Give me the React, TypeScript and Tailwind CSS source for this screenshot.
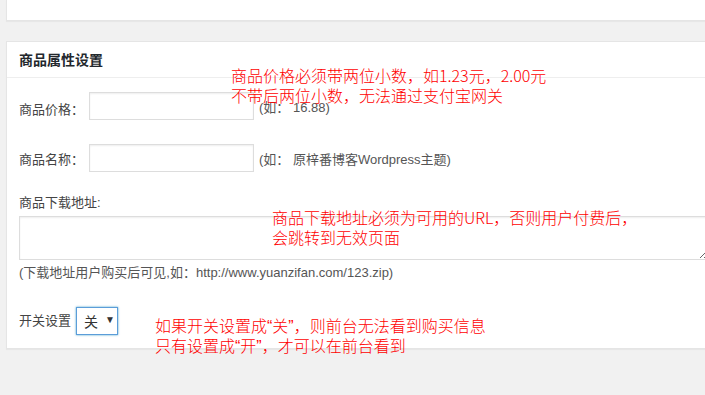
export default function App() {
  const q = "font-['Liberation_Sans',sans-serif]";
  return (
    <div className="relative w-[705px] h-[395px] overflow-hidden bg-[#f1f1f1] font-['Liberation_Sans','Noto_Sans_CJK_SC',sans-serif]">
      <div className="pl-[6px]">
        <div className="h-[21px] w-[720px] bg-white border-x border-b border-[#e5e5e5] shadow-[0_1px_1px_rgba(0,0,0,0.04)]" />
        <div className="mt-[20px] w-[720px] bg-white border border-[#e5e5e5] shadow-[0_1px_1px_rgba(0,0,0,0.04)]">
          <div className="h-[36px] border-b border-[#eeeeee] pl-[12px] flex items-center text-[14px] font-bold text-[#23282d] leading-none">
            商品属性设置
          </div>
          <div className="pl-[12px] pt-[14px] pb-[13px] text-[13px] text-[#444] leading-[18px]">
            <div className="flex items-center h-[28px]">
              <span className="w-[70px] mt-[8px]">商品价格：</span>
              <div className="w-[165px] h-[28px] border border-[#ddd] bg-white shadow-[inset_0_1px_2px_rgba(0,0,0,0.07)]" />
              <span className="ml-[5px] mt-[4px] text-[#555]">(如： 16.88)</span>
            </div>
            <div className="flex items-center h-[28px] mt-[24px]">
              <span className="w-[70px] mt-[4px]">商品名称：</span>
              <div className="w-[165px] h-[28px] border border-[#ddd] bg-white shadow-[inset_0_1px_2px_rgba(0,0,0,0.07)]" />
              <span className="ml-[5px] mt-[4px] text-[#555]">(如： 原梓番博客Wordpress主题)</span>
            </div>
            <div className="mt-[22px]">商品下载地址:</div>
            <textarea
              readOnly
              className="block mt-[4px] w-[690px] h-[44px] border border-[#ddd] bg-white shadow-[inset_0_1px_2px_rgba(0,0,0,0.07)] outline-none"
            />
            <div className="mt-[4px] text-[#555]">(下载地址用户购买后可见,如：http://www.yuanzifan.com/123.zip)</div>
            <div className="flex items-center mt-[25px] h-[28px]">
              <span>开关设置</span>
              <div className="ml-[5px] w-[42px] h-[28px] border border-[#5b9dd9] shadow-[0_0_2px_rgba(30,140,190,0.8)] bg-white flex items-center pl-[7px] text-[14px] text-[#333]">
                <span className="font-['Noto_Sans_CJK_SC',sans-serif]">关</span>
                <span className="ml-[7px] text-[10px] leading-none text-[#333] mt-[-2px]">▼</span>
              </div>
            </div>
          </div>
        </div>
      </div>

      <div className="absolute left-[231px] top-[65px] whitespace-nowrap text-[16px] leading-[20px] text-[#ff0000] font-[300] font-['Noto_Sans_CJK_SC',sans-serif]">
        商品价格必须带两位小数，如1.23元，2.00元
        <br />
        不带后两位小数，无法通过支付宝网关
      </div>
      <div className="absolute left-[272px] top-[207px] whitespace-nowrap text-[16px] leading-[20px] text-[#ff0000] font-[300] font-['Noto_Sans_CJK_SC',sans-serif]">
        商品下载地址必须为可用的URL，否则用户付费后，
        <br />
        会跳转到无效页面
      </div>
      <div className="absolute left-[155px] top-[316px] whitespace-nowrap text-[16px] leading-[19px] text-[#ff0000] font-[300] font-['Noto_Sans_CJK_SC',sans-serif]">
        如果开关设置成<span className={q}>“</span>关<span className={q}>”</span>，则前台无法看到购买信息
        <br />
        只有设置成<span className={q}>“</span>开<span className={q}>”</span>，才可以在前台看到
      </div>
    </div>
  );
}
